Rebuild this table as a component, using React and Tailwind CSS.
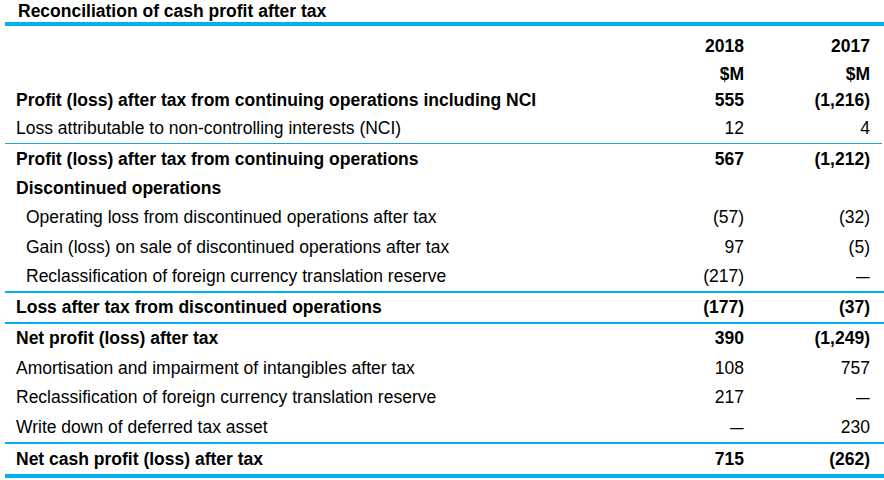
const rows = [
  { label: 'Profit (loss) after tax from continuing operations including NCI', a: '555', b: '(1,216)', bold: true, h: 'h-[27px]' },
  { label: 'Loss attributable to non-controlling interests (NCI)', a: '12', b: '4', h: 'h-[29px]', line: 'thin' },
  { label: 'Profit (loss) after tax from continuing operations', a: '567', b: '(1,212)', bold: true, h: 'h-[30px]' },
  { label: 'Discontinued operations', bold: true, h: 'h-[29px]' },
  { label: 'Operating loss from discontinued operations after tax', a: '(57)', b: '(32)', indent: true, h: 'h-[29px]' },
  { label: 'Gain (loss) on sale of discontinued operations after tax', a: '97', b: '(5)', indent: true, h: 'h-[30px]' },
  { label: 'Reclassification of foreign currency translation reserve', a: '(217)', b: '–', indent: true, h: 'h-[29px]', line: 'mid' },
  { label: 'Loss after tax from discontinued operations', a: '(177)', b: '(37)', bold: true, h: 'h-[29px]', line: 'mid' },
  { label: 'Net profit (loss) after tax', a: '390', b: '(1,249)', bold: true, h: 'h-[29px]' },
  { label: 'Amortisation and impairment of intangibles after tax', a: '108', b: '757', h: 'h-[30px]' },
  { label: 'Reclassification of foreign currency translation reserve', a: '217', b: '–', h: 'h-[29px]' },
  { label: 'Write down of deferred tax asset', a: '–', b: '230', h: 'h-[30px]', line: 'mid' },
  { label: 'Net cash profit (loss) after tax', a: '715', b: '(262)', bold: true, h: 'h-[30px]', line: 'thick' },
];

// dashes in the source are wider than a plain en dash
const Cell = ({ value, w }) => (
  <div className={`${w} text-right`}>
    {value === '–' ? <span className="inline-block origin-right scale-x-[1.4]">–</span> : value}
  </div>
);

const Row = ({ row }) => (
  <>
    <div className={`flex items-center pt-px ${row.h} ${row.bold ? 'font-bold' : ''}`}>
      <div className={`flex-1 whitespace-nowrap ${row.indent ? 'pl-[26px]' : 'pl-[16px]'}`}>{row.label}</div>
      <Cell value={row.a} w="w-[100px]" />
      <Cell value={row.b} w="w-[126px]" />
      <div className="w-[14px]"></div>
    </div>
    {row.line === 'thin' && <div className="ml-[5px] mr-[2px] h-px bg-[#1ea3df]"></div>}
    {row.line === 'mid' && <div className="ml-[5px] h-[2px] bg-[#00b0f0]"></div>}
    {row.line === 'thick' && <div className="ml-[5px] h-[4px] bg-[#00b0f0]"></div>}
  </>
);

export default function App() {
  return (
    <div className="w-[884px] h-[480px] overflow-hidden bg-white text-black text-[17.5px] leading-none font-['Liberation_Sans',Arial,sans-serif]">
      <div className="h-[22px] pl-[18px] pt-[2px] flex items-center font-bold">Reconciliation of cash profit after tax</div>
      <div className="ml-[5px] h-[4px] bg-[#00b0f0]"></div>
      <div className="mt-[5px] pt-px flex items-center h-[30px] font-bold">
        <div className="flex-1"></div>
        <div className="w-[100px] text-right">2018</div>
        <div className="w-[126px] text-right">2017</div>
        <div className="w-[14px]"></div>
      </div>
      <div className="flex items-center pt-px h-[26px] font-bold">
        <div className="flex-1"></div>
        <div className="w-[100px] text-right">$M</div>
        <div className="w-[126px] text-right">$M</div>
        <div className="w-[14px]"></div>
      </div>
      {rows.map((row, i) => (
        <Row key={i} row={row} />
      ))}
    </div>
  );
}
